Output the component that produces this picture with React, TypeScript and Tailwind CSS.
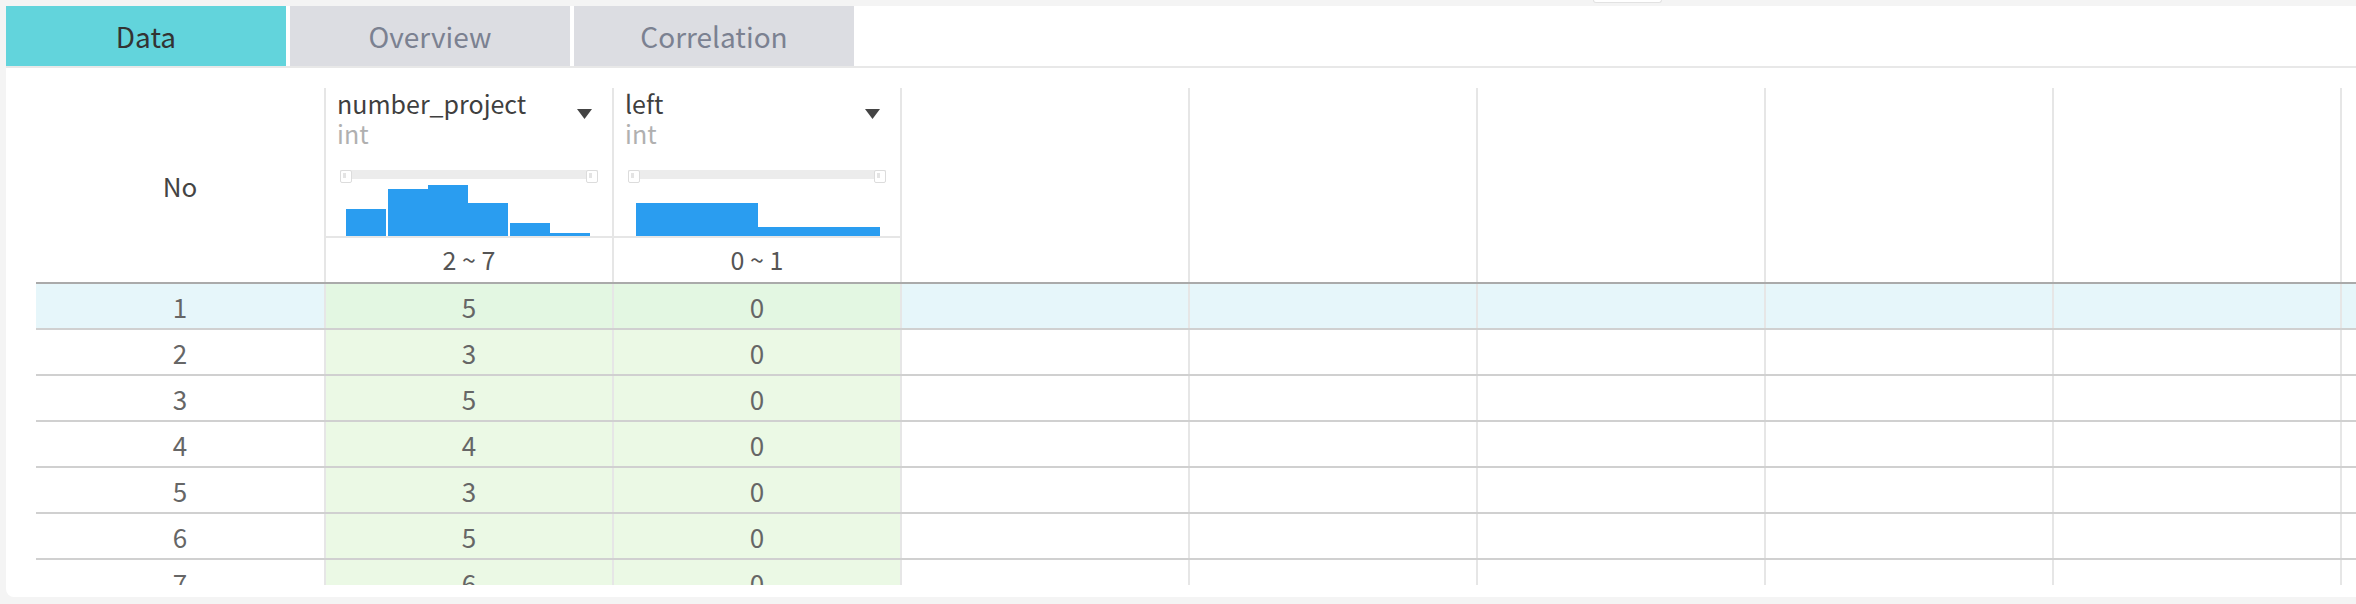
import React from "react";

const FONT = { fontFamily: '"Noto Sans CJK KR", "Noto Sans", sans-serif' };

type Col = {
  name: string;
  type: string;
  range: string;
  offset: number;
  bars: { w: number; h: number; gap?: number }[];
};

const cols: Col[] = [
  {
    name: "number_project",
    type: "int",
    range: "2 ~ 7",
    offset: 20,
    bars: [
      { w: 40, h: 27 },
      { w: 40, h: 47, gap: 2 },
      { w: 40, h: 51 },
      { w: 40, h: 33 },
      { w: 40, h: 13, gap: 2 },
      { w: 40, h: 3 },
    ],
  },
  {
    name: "left",
    type: "int",
    range: "0 ~ 1",
    offset: 22,
    bars: [
      { w: 122, h: 33 },
      { w: 122, h: 9 },
    ],
  },
];

const rows: [number, number][] = [
  [5, 0],
  [3, 0],
  [5, 0],
  [4, 0],
  [3, 0],
  [5, 0],
  [6, 0],
];

const EMPTY = 6;

function Handle() {
  return (
    <div className="w-[12px] h-[13px] bg-white border border-[#dcdcdc] rounded-[2px] flex items-start pl-[2px] pt-[2px] shrink-0">
      <div className="w-[3px] h-[5px] bg-[#e4e4e4]" />
    </div>
  );
}

function HeaderCol({ c }: { c: Col }) {
  return (
    <div className="w-[288px] shrink-0 border-l-2 border-[#e6e6e6] flex flex-col h-full">
      <div className="flex items-start h-[60px]">
        <div className="flex flex-col pl-[11px] flex-1">
          <div className="text-[25px] leading-[30px] text-[#3f3f3f]">{c.name}</div>
          <div className="text-[25px] leading-[30px] text-[#b0b0b0]">{c.type}</div>
        </div>
        <svg width="15" height="10" viewBox="0 0 15 10" className="mt-[21px] mr-[20px]">
          <polygon points="0,0 15,0 7.5,10" fill="#444444" />
        </svg>
      </div>
      <div className="h-[22px]" />
      <div className="relative h-[13px] mx-[14px]">
        <div className="absolute left-0 right-0 top-0 h-[9px] bg-[#ececec]" />
        <div className="relative flex justify-between">
          <Handle />
          <Handle />
        </div>
      </div>
      <div className="flex items-end h-[53px]" style={{ paddingLeft: c.offset }}>
        {c.bars.map((b, i) => (
          <div
            key={i}
            className="bg-[#2a9df0] shrink-0"
            style={{ width: b.w, height: b.h, marginLeft: b.gap ?? 0 }}
          />
        ))}
      </div>
      <div className="h-[2px] bg-[#e6e6e6]" />
      <div className="flex-1 flex items-center justify-center text-[25px] text-[#555555]">
        {c.range}
      </div>
    </div>
  );
}

export default function App() {
  return (
    <div
      className="relative w-[2356px] h-[604px] bg-[#f4f4f4] pt-[6px] pl-[6px] overflow-hidden"
      style={FONT}
    >
      <div className="absolute left-[1593px] top-0 w-[69px] h-[3px] bg-white border border-t-0 border-[#e2e2e2] rounded-b-[5px]" />
      <div className="w-[2350px] h-[591px] bg-white rounded-bl-[8px] overflow-hidden flex flex-col">
        <div className="flex gap-[4px] h-[60px] shrink-0">
          <div className="w-[280px] bg-[#62d4dc] flex items-center justify-center text-[28px] text-[#333333]">
            Data
          </div>
          <div className="w-[280px] bg-[#dcdde2] flex items-center justify-center text-[28px] text-[#7b8191]">
            Overview
          </div>
          <div className="w-[280px] bg-[#dcdde2] flex items-center justify-center text-[28px] text-[#7b8191]">
            Correlation
          </div>
        </div>
        <div className="h-[2px] bg-[#e8e8e8] shrink-0" />
        <div className="pt-[20px] pl-[30px]">
          <div className="h-[497px] overflow-hidden flex flex-col w-max">
            <div className="flex h-[196px] border-b-2 border-[#aaaaaa] shrink-0">
              <div className="w-[288px] shrink-0 flex items-center justify-center text-[26px] text-[#444444]">
                No
              </div>
              {cols.map((c) => (
                <HeaderCol key={c.name} c={c} />
              ))}
              {Array.from({ length: EMPTY }).map((_, i) => (
                <div key={i} className="w-[288px] shrink-0 border-l-2 border-[#e6e6e6]" />
              ))}
            </div>
            {rows.map((r, ri) => {
              const sel = ri === 0;
              return (
                <div
                  key={ri}
                  className={`flex h-[46px] border-b-2 border-[#d0d0d0] shrink-0 ${sel ? "bg-[#e6f6fa]" : "bg-white"}`}
                >
                  <div className="w-[288px] shrink-0 flex items-center justify-center text-[26px] text-[#666666]">
                    {ri + 1}
                  </div>
                  {r.map((v, ci) => (
                    <div
                      key={ci}
                      className={`w-[288px] shrink-0 border-l-2 border-[#e6e6e6] flex items-center justify-center text-[26px] text-[#666666] ${sel ? "bg-[#e3f7e2]" : "bg-[#ebf9e5]"}`}
                    >
                      {v}
                    </div>
                  ))}
                  {Array.from({ length: EMPTY }).map((_, i) => (
                    <div key={i} className="w-[288px] shrink-0 border-l-2 border-[#e6e6e6]" />
                  ))}
                </div>
              );
            })}
          </div>
        </div>
      </div>
    </div>
  );
}
